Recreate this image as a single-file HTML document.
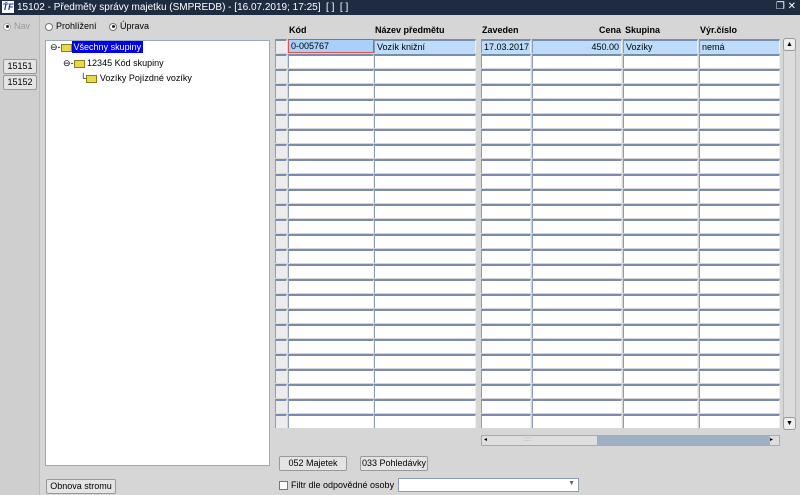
<!DOCTYPE html>
<html><head><meta charset="utf-8"><style>
*{box-sizing:border-box;margin:0;padding:0}
body{width:800px;height:495px;background:#d6d6d6;font-family:"Liberation Sans",sans-serif;font-size:9px;color:#000;position:relative;overflow:hidden}
.a{position:absolute}
.title{left:0;top:0;width:800px;height:15px;background:#1f2b40;color:#fff;font-size:10px;line-height:15px;padding-left:17px}
.logo{left:2px;top:1px;width:12px;height:12px;background:#fff;color:#1c3a9a;font-size:9px;font-weight:bold;font-style:italic;line-height:12px;text-align:center}
.strip{left:0;top:15px;width:40px;height:480px;background:#cfcfcf;border-right:1px solid #bbb}
.btn{background:#e4e4e4;border:1px solid #999;border-radius:2px;text-align:center;line-height:13px}
.tree{left:45px;top:40px;width:225px;height:426px;background:#fff;border:1px solid #9aa8c0}
.c{position:absolute;height:14px;background:#fff;border-top:2px solid #7a8cab;border-left:1px solid #8b9cb8;border-right:1px solid #eee;line-height:12px;padding-left:2px;white-space:nowrap;overflow:hidden}
.m{background:#ececec}
.sel{background:#bcdcfa}
.hd{font-weight:bold;top:25px}
.fold{display:inline-block;width:11px;height:8px;background:#e8d84a;border:1px solid #8a7a20;vertical-align:middle}
.rad{display:inline-block;width:8px;height:8px;border:1px solid #777;border-radius:50%;background:#fff;vertical-align:middle;margin-right:3px;position:relative}
.rad.on::after{content:"";position:absolute;left:1.5px;top:1.5px;width:3px;height:3px;border-radius:50%;background:#222}
</style></head><body>
<div class="a title">15102 - Předměty správy majetku (SMPREDB) - [16.07.2019; 17:25]&nbsp; [ ]&nbsp; [ ]</div>
<div class="a logo">ŤF</div>
<div class="a" style="right:4px;top:1px;color:#fff;font-size:10px">&#x2750; ✕</div>
<div class="a strip"></div>
<div class="a" style="left:3px;top:21px;color:#999"><span class="rad on" style="border-color:#aaa"></span>Nav</div>
<div class="a btn" style="left:3px;top:59px;width:34px;height:15px">15151</div>
<div class="a btn" style="left:3px;top:75px;width:34px;height:15px">15152</div>
<div class="a" style="left:45px;top:21px"><span class="rad"></span>Prohlížení</div>
<div class="a" style="left:109px;top:21px"><span class="rad on"></span>Úprava</div>
<div class="a tree"></div>
<div class="a" style="left:50px;top:42px">⊖-<span class="fold"></span><span style="background:#0000ee;color:#fff;padding:1px 2px">Všechny skupiny</span></div>
<div class="a" style="left:63px;top:58px">⊖-<span class="fold"></span> 12345 Kód skupiny</div>
<div class="a" style="left:80px;top:73px">└<span class="fold"></span> Vozíky Pojízdné vozíky</div>
<div class="a btn" style="left:46px;top:479px;width:70px;height:15px">Obnova stromu</div>
<div class="a hd" style="left:289px">Kód</div>
<div class="a hd" style="left:375px">Název předmětu</div>
<div class="a hd" style="left:482px">Zaveden</div>
<div class="a hd" style="left:532px;width:89px;text-align:right">Cena</div>
<div class="a hd" style="left:625px">Skupina</div>
<div class="a hd" style="left:700px">Výr.číslo</div>
<div id="g"></div>
<div class="a" style="left:783px;top:38px;width:13px;height:392px;background:#dcdcdc;border:1px solid #bbb;border-radius:3px"></div>
<div class="a" style="left:783px;top:38px;width:13px;height:13px;background:#eee;border:1px solid #999;border-radius:3px;font-size:7px;text-align:center;line-height:11px">▲</div>
<div class="a" style="left:783px;top:417px;width:13px;height:13px;background:#eee;border:1px solid #999;border-radius:3px;font-size:7px;text-align:center;line-height:11px">▼</div>
<div class="a" style="left:481px;top:435px;width:299px;height:11px;background:#9fafc4;border:1px solid #aaa"></div>
<div class="a" style="left:481px;top:435px;width:117px;height:11px;background:#dedede;border:1px solid #aaa;font-size:6px;line-height:9px;padding-left:2px">◂ <span style="margin-left:35px;color:#999">:::::</span></div>
<div class="a" style="left:770px;top:436px;width:9px;height:9px;background:#ddd;font-size:6px;line-height:9px">▸</div>
<div class="a btn" style="left:279px;top:456px;width:68px;height:15px">052 Majetek</div>
<div class="a btn" style="left:360px;top:456px;width:68px;height:15px">033 Pohledávky</div>
<div class="a" style="left:279px;top:481px;width:9px;height:9px;background:#fff;border:1px solid #777"></div>
<div class="a" style="left:291px;top:480px">Filtr dle odpovědné osoby</div>
<div class="a" style="left:398px;top:478px;width:181px;height:14px;background:#fff;border:1px solid #8b9cb8"><span style="position:absolute;right:3px;top:1px;font-size:7px;color:#666">▼</span></div>
<script>
var cols=[[275,12,1],[288,86],[374,102],[481,50],[532,90],[623,75],[699,81]];
var t=["","0-005767","Vozík knižní","17.03.2017","450.00","Vozíky","nemá"];
var h="";
for(var r=0;r<26;r++){var y=39+15*r;for(var i=0;i<cols.length;i++){var c=cols[i];var cl="c"+(i==0?" m":"")+(r==0&&i>0?" sel":"");var st="left:"+c[0]+"px;top:"+y+"px;width:"+c[1]+"px;";if(r==0&&i==1)st+="border:1px solid #e05050;background:#a8d0f8;line-height:12px;";if(r==0&&i==4)st+="text-align:right;padding-right:2px;";h+='<div class="'+cl+'" style="'+st+'">'+(r==0?t[i]:"")+'</div>';}}
document.getElementById("g").innerHTML=h;
</script>
</body></html>
